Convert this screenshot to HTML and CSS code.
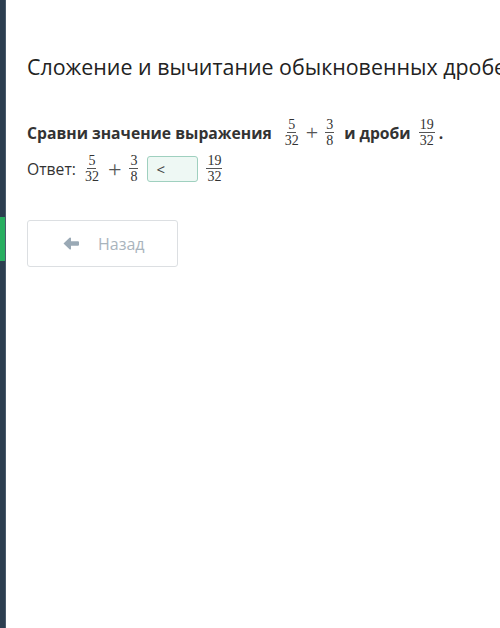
FILE: index.html
```html
<!DOCTYPE html>
<html lang="ru">
<head>
    <meta charset="UTF-8">
    <meta name="viewport" content="width=device-width, initial-scale=1.0">
    <title>Сложение и вычитание обыкновенных дробей</title>
    <link rel="stylesheet" href="styles.css">
</head>
<body>
    <!-- Боковая полоса -->
    <aside class="sidebar">
        <div class="sidebar-mark"></div>
    </aside>

    <main class="content">
        <h1 class="title">Сложение и вычитание обыкновенных дробей</h1>

        <p class="task">
            Сравни значение выражения
            <span class="math">
                <span class="frac"><span class="num">5</span><span class="den">32</span></span>
                <span class="op">+</span>
                <span class="frac"><span class="num">3</span><span class="den">8</span></span>
            </span>
            и дроби
            <span class="math math-tight">
                <span class="frac"><span class="num">19</span><span class="den">32</span></span>
            </span><span class="dot">.</span>
        </p>

        <div class="answer">
            <span class="answer-label">Ответ:</span>
            <span class="math">
                <span class="frac"><span class="num">5</span><span class="den">32</span></span>
                <span class="op">+</span>
                <span class="frac"><span class="num">3</span><span class="den">8</span></span>
            </span>
            <span class="answer-box">&lt;</span>
            <span class="math">
                <span class="frac"><span class="num">19</span><span class="den">32</span></span>
            </span>
        </div>

        <button class="back-button" type="button">
            <svg class="back-icon" width="16" height="13" viewBox="0 0 16 13">
                <path d="M0.5 6.5 L6.5 0.8 Q7.5 0 8 1 L8 4.3 L15 4.3 Q16 4.3 16 5.3 L16 7.7 Q16 8.7 15 8.7 L8 8.7 L8 12 Q7.5 13 6.5 12.2 Z" fill="#9aa9b5"/>
            </svg>
            <span>Назад</span>
        </button>
    </main>
</body>
</html>
```

FILE: styles.css
```css
* {
    box-sizing: border-box;
    margin: 0;
    padding: 0;
}

html, body {
    height: 100%;
    overflow: hidden;
}

body {
    font-family: 'Open Sans', 'Liberation Sans', sans-serif;
    display: flex;
    background-color: #fff;
    color: #333;
}

/* Боковая полоса */
.sidebar {
    width: 6px;
    flex-shrink: 0;
    background-color: #2c3e50;
    border-right: 1px solid #4a5b6c;
    padding-top: 217px;
}

.sidebar-mark {
    height: 44px;
    background-color: #27ae60;
}

.content {
    flex-grow: 1;
    padding: 47px 0 0 21px;
    overflow: hidden;
}

.title {
    font-size: 21.4px;
    font-weight: 400;
    color: #222;
    white-space: nowrap;
    line-height: 40px;
    margin-bottom: 30px;
}

.task {
    display: flex;
    align-items: center;
    font-size: 15.7px;
    font-weight: 700;
    color: #333;
    height: 32px;
    margin-top: 1px;
    white-space: nowrap;
}

.math {
    display: inline-flex;
    align-items: center;
    font-family: 'Liberation Serif', 'DejaVu Serif', serif;
    font-weight: 400;
    color: #333;
    margin: 0 9px 0 12px;
}

.task .math-tight {
    margin: 0 0 0 7px;
}

.dot {
    margin-left: 3px;
}

.frac {
    display: inline-flex;
    flex-direction: column;
    align-items: center;
    font-size: 14px;
    padding: 0 1px;
}

.num {
    border-bottom: 1px solid #555;
    padding: 0 1px;
    line-height: 14px;
}

.den {
    line-height: 15px;
}

.op {
    font-size: 22px;
    color: #555;
    margin: 0 6px;
    line-height: 22px;
}

.answer {
    display: flex;
    align-items: center;
    font-size: 15.7px;
    color: #333;
    margin-top: 4px;
    height: 32px;
    white-space: nowrap;
}

.answer .math {
    margin: 0 0 0 8px;
}

.answer .op {
    font-size: 24px;
    margin: 0 7px 0 8px;
}

.answer-box {
    display: inline-flex;
    align-items: center;
    width: 51px;
    height: 26px;
    margin: 0 7px 0 8px;
    padding-left: 8px;
    background-color: #eef8f4;
    border: 1px solid #9fd0bf;
    border-radius: 3px;
    font-size: 15px;
    color: #444;
}

.answer-box + .math {
    margin-left: 0;
}

.back-button {
    display: flex;
    align-items: center;
    width: 151px;
    height: 47px;
    margin-top: 35px;
    padding-left: 35px;
    background-color: #fff;
    border: 1px solid #dcdfe2;
    border-radius: 3px;
    font-family: 'Open Sans', 'Liberation Sans', sans-serif;
    font-size: 16px;
    color: #a9b4bd;
    cursor: pointer;
}

.back-icon {
    margin-right: 19px;
}
```
